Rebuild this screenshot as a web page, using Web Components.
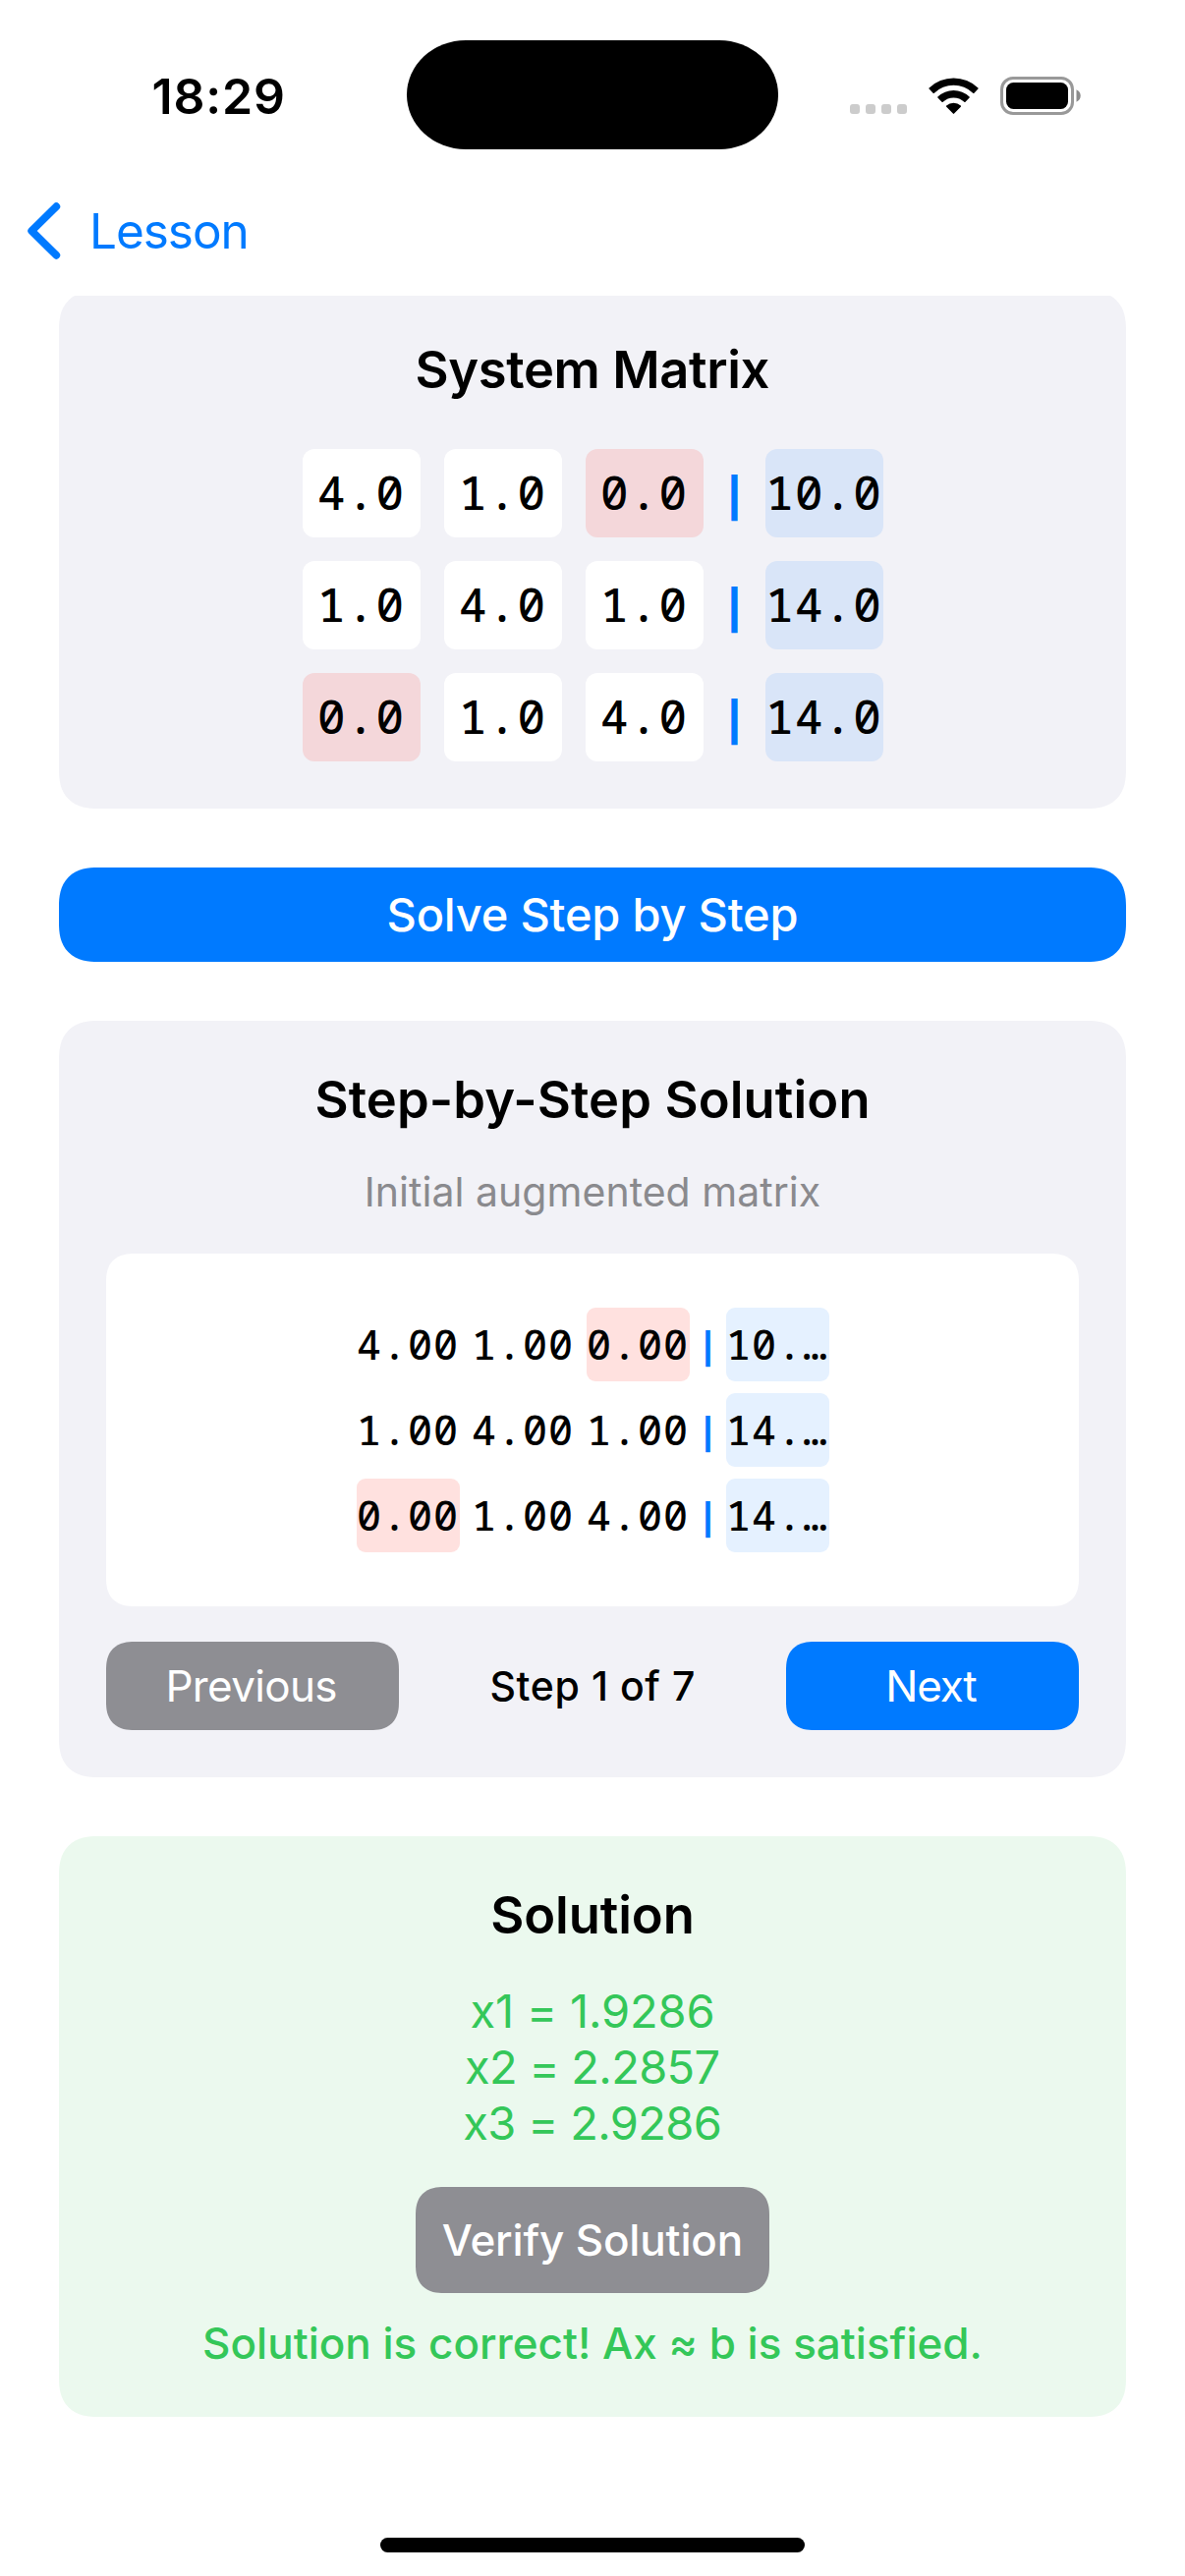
<!DOCTYPE html>
<html lang="en">
<head>
<meta charset="utf-8">
<title>Lesson</title>
<style>
  html, body { margin: 0; background: #fff; }
  body { width: 1206px; height: 2622px; overflow: hidden; font-family: Inter, "Liberation Sans", sans-serif; color: #000; }
</style>
</head>
<body>
<lesson-screen></lesson-screen>
<script>
const CORNERS = `
  @supports (corner-shape: squircle) {
    .smooth { corner-shape: superellipse(1.3); border-radius: calc(var(--r) * 1.2) !important; }
  }
  .smooth { border-radius: var(--r); box-sizing: border-box; }
`;
function define(name, html, setup) {
  const template = document.createElement('template');
  template.innerHTML = html;
  customElements.define(name, class extends HTMLElement {
    constructor() {
      super();
      this.attachShadow({ mode: 'open' }).appendChild(template.content.cloneNode(true));
    }
    connectedCallback() { if (setup) setup(this, this.shadowRoot); }
  });
}
const ctx = document.createElement('canvas').getContext('2d');

/* One line of text; "ink" is the width its glyphs should cover. */
define('ui-text', `<style>
  :host { display: block; white-space: nowrap; text-align: center; font-family: Inter, "Liberation Sans", sans-serif; }
  span { display: inline-block; }
</style><span><slot></slot></span>`, (el, root) => {
  const size = +el.getAttribute('size'), weight = el.getAttribute('weight') || 400;
  const text = el.textContent, span = root.querySelector('span');
  el.style.fontSize = size + 'px';
  el.style.fontWeight = weight;
  el.style.lineHeight = el.getAttribute('line') + 'px';
  ctx.font = `${weight} ${size}px Inter, "Liberation Sans", sans-serif`;
  const m = ctx.measureText(text);
  const gap = (+el.getAttribute('ink') - m.actualBoundingBoxLeft - m.actualBoundingBoxRight) / (text.length - 1);
  span.style.letterSpacing = gap.toFixed(3) + 'px';
  span.style.marginRight = (-gap).toFixed(3) + 'px';
});

define('status-bar', `<style>
  :host { display: grid; grid-template-columns: 414px 378px 414px; height: 195px; }
  .time { padding: 68px 0 0 154.500px; justify-self: start; }
  .island { height: 111px; margin-top: 41.400px; background: #000; border-radius: 60px / 55.500px; }
  .icons { display: flex; padding: 78px 0 0 73px; align-items: flex-start; }
  svg { display: block; }
  .dots { display: flex; gap: 6px; margin: 28px 22px 0 0; }
  .dots i { width: 10px; height: 10px; border-radius: 3px; background: #ccc; }
  .wifi { margin-right: 22px; }
</style>
<div class="time"><ui-text size="50" weight="600" line="61" ink="131.5">18:29</ui-text></div>
<div class="island"></div>
<div class="icons">
  <div class="dots"><i></i><i></i><i></i><i></i></div>
  <svg class="wifi" width="51" height="39" viewBox="0 0 51 39">
    <path d="M.6 11.4Q0 12 .6 12.6L4.6 16.7Q5.2 17.3 5.8 16.7A28.2 28.2 0 0 1 45.200 16.7Q45.800 17.300 46.400 16.700L50.400 12.600Q51 12 50.400 11.400A36 36 0 0 0 .6 11.4Z"/>
    <path d="M9.4 20.400Q8.800 21 9.400 21.600L13.500 25.700Q14.100 26.200 14.700 25.700A15.900 15.900 0 0 1 36.300 25.700Q36.900 26.200 37.500 25.700L41.600 21.600Q42.200 21 41.600 20.400A23.500 23.500 0 0 0 9.400 20.400Z"/>
    <path d="M18.200 29.500Q17.600 30.100 18.200 30.700L24.900 37.600Q25.500 38.200 26.100 37.600L32.800 30.700Q33.400 30.100 32.800 29.500A10.800 10.800 0 0 0 18.200 29.500Z"/>
  </svg>
  <svg width="83" height="39" viewBox="0 0 83 39">
    <rect x="1.500" y="1.500" width="72" height="36" rx="11.500" fill="none" stroke="#999" stroke-width="3"/>
    <rect x="6" y="6" width="63" height="27" rx="7.500"/>
    <path d="M77.500 13.300Q81.700 15.300 81.700 19.500T77.500 25.700Z" fill="#8c8c8c"/>
  </svg>
</div>`);

define('nav-bar', `<style>
  :host { display: flex; align-items: center; height: 79px; margin-bottom: 27px; padding-left: 28px; color: #007aff; }
  svg { display: block; margin-right: 29px; }
</style>
<svg width="34" height="58" viewBox="0 0 34 58"><path d="M29.300 4.200L4.200 29L29.300 53.800" fill="none" stroke="#007aff" stroke-width="7.800" stroke-linecap="round" stroke-linejoin="round"/></svg>
<ui-text size="49.500" line="60" ink="155.500">Lesson</ui-text>`);

define('panel-card', `<style>${CORNERS}
  :host { display: block; }
  .box { --r: 33px; padding: 48px; background: var(--fill, #f2f2f7); display: flex; flex-direction: column; align-items: stretch; }
</style><div class="box smooth"><slot></slot></div>`);

define('push-button', `<style>${CORNERS}
  :host { display: block; }
  .box { --r: var(--radius, 24px); width: 100%; height: var(--height, 90px); background: var(--fill, #007aff); color: #fff; display: flex; align-items: center; justify-content: center; }
</style><div class="box smooth"><slot></slot></div>`);

define('matrix-bar', `<style>
  :host { display: flex; align-items: center; justify-content: center; color: #007aff; }
  span { display: block; font: 700 40px/40px Inter, sans-serif; }
</style><span><slot></slot></span>`, (el, root) => {
  ctx.font = '700 40px Inter, sans-serif';
  const m = ctx.measureText('|');
  const w = m.actualBoundingBoxRight + m.actualBoundingBoxLeft, h = m.actualBoundingBoxAscent + m.actualBoundingBoxDescent;
  const sx = el.getAttribute('w') / w, sy = el.getAttribute('h') / h;
  const baseline = 20 + 0.3637 * 40;
  const inkMid = baseline + (m.actualBoundingBoxDescent - m.actualBoundingBoxAscent) / 2;
  const drop = +el.getAttribute('drop') - (inkMid - 20) * sy;
  root.querySelector('span').style.transform = `translateY(${drop}px) scale(${sx}, ${sy})`;
});

define('matrix-cell', `<style>
  :host { display: flex; align-items: center; justify-content: center; width: var(--cw); height: var(--ch); border-radius: var(--cr); background: var(--cell); white-space: nowrap;
    font-family: "Noto Sans Mono", "DejaVu Sans Mono", monospace; font-weight: 500; font-size: var(--cf); letter-spacing: var(--cs); line-height: 1.362; }
  :host([tone="zero"]) { background: var(--zero); }
  :host([tone="rhs"]) { background: var(--rhs); }
  span { margin-right: calc(-1 * var(--cs)); padding: 0 1px 1px 0; }
</style><span><slot></slot></span>`);

/* Augmented matrix: rows are separated by ";", values by spaces. */
define('matrix-grid', `<style>
  :host { display: flex; flex-direction: column; align-items: center; gap: var(--gap);
    --cw: 120px; --ch: 90px; --cr: 12px; --cf: 47.500px; --cs: 1.170px; --gap: 24px; --slot: 15px;
    --cell: #fff; --zero: #f4d7da; --rhs: #d9e5f8; }
  :host([compact]) { --cw: 105px; --ch: 75px; --cr: 9px; --cf: 41.700px; --cs: .980px; --gap: 12px; --slot: 13px;
    --zero: #ffe1df; --rhs: #e5f1ff; }
  .row { display: flex; gap: var(--gap); }
  matrix-bar { width: var(--slot); }
</style>`, (el, root) => {
  const compact = el.hasAttribute('compact');
  for (const line of el.getAttribute('rows').split(';')) {
    const row = document.createElement('div');
    row.className = 'row';
    const values = line.trim().split(' ');
    values.forEach((value, i) => {
      const last = i === values.length - 1;
      if (last) {
        const bar = document.createElement('matrix-bar');
        bar.textContent = '|';
        bar.setAttribute('w', compact ? 5.8 : 7.9);
        bar.setAttribute('h', compact ? 37.3 : 47.5);
        bar.setAttribute('drop', compact ? 3.4 : 4.7);
        row.append(bar);
      }
      const cell = document.createElement('matrix-cell');
      cell.textContent = value;
      if (last) cell.setAttribute('tone', 'rhs');
      else if (parseFloat(value) === 0) cell.setAttribute('tone', 'zero');
      row.append(cell);
    });
    root.append(row);
  }
});

define('step-viewer', `<style>${CORNERS}
  :host { display: block; }
  .sub { color: #8a8a8e; margin: 37px 0 37px; }
  .sheet { --r: 24px; background: #fff; height: 359px; display: flex; flex-direction: column; justify-content: center; }
  .controls { display: flex; align-items: center; justify-content: space-between; margin-top: 36px; }
  push-button { width: 298px; }
  push-button ui-text { margin-right: 2px; }
  .prev { --fill: #8e8e93; }
</style>
<ui-text size="52.500" weight="600" line="64" ink="560">Step-by-Step Solution</ui-text>
<ui-text class="sub" size="41" line="51" ink="461">Initial augmented matrix</ui-text>
<div class="sheet smooth"><matrix-grid compact rows="4.00 1.00 0.00 10.…; 1.00 4.00 1.00 14.…; 0.00 1.00 4.00 14.…"></matrix-grid></div>
<div class="controls">
  <push-button class="prev"><ui-text size="44" line="54" ink="171">Previous</ui-text></push-button>
  <ui-text size="41" weight="500" line="50" ink="205.500">Step 1 of 7</ui-text>
  <push-button><ui-text size="44" line="54" ink="90">Next</ui-text></push-button>
</div>`);

define('solution-view', `<style>
  :host { display: flex; flex-direction: column; align-items: center; }
  .values { margin: 37px 0; color: #34c759; }
  push-button { width: 360px; --height: 108px; --fill: #8e8e93; }
  .note { margin-top: 24px; color: #34c759; }
</style>
<ui-text size="52.500" weight="600" line="64" ink="202.500">Solution</ui-text>
<div class="values">
  <ui-text size="47" line="57" ink="246">x1 = 1.9286</ui-text>
  <ui-text size="47" line="57" ink="257.500">x2 = 2.2857</ui-text>
  <ui-text size="47" line="57" ink="260.500">x3 = 2.9286</ui-text>
</div>
<push-button><ui-text size="44" weight="500" line="54" ink="303">Verify Solution</ui-text></push-button>
<ui-text class="note" size="44" weight="500" line="54" ink="788.500">Solution is correct! Ax ≈ b is satisfied.</ui-text>`);

define('lesson-screen', `<style>
  :host { display: flex; flex-direction: column; width: 1206px; height: 2622px; background: #fff; }
  main { display: flow-root; flex: 1; overflow: hidden; }
  .stack { display: flex; flex-direction: column; gap: 60px; padding: 0 60px; margin-top: -5px; }
  .solve { --height: 96px; --radius: 33px; }
  .good { --fill: #ebf9ee; }
  matrix-grid { margin-top: 49px; }
  .home { width: 432px; height: 15px; border-radius: 8px; background: #000; margin: 0 auto 24px; }
</style>
<status-bar></status-bar>
<nav-bar></nav-bar>
<main><div class="stack">
  <panel-card>
    <ui-text size="52.500" weight="600" line="64" ink="358">System Matrix</ui-text>
    <matrix-grid rows="4.0 1.0 0.0 10.0; 1.0 4.0 1.0 14.0; 0.0 1.0 4.0 14.0"></matrix-grid>
  </panel-card>
  <push-button class="solve"><ui-text size="47" weight="500" line="58" ink="415">Solve Step by Step</ui-text></push-button>
  <panel-card><step-viewer></step-viewer></panel-card>
  <panel-card class="good"><solution-view></solution-view></panel-card>
</div></main>
<div class="home"></div>`);
</script>
</body>
</html>
